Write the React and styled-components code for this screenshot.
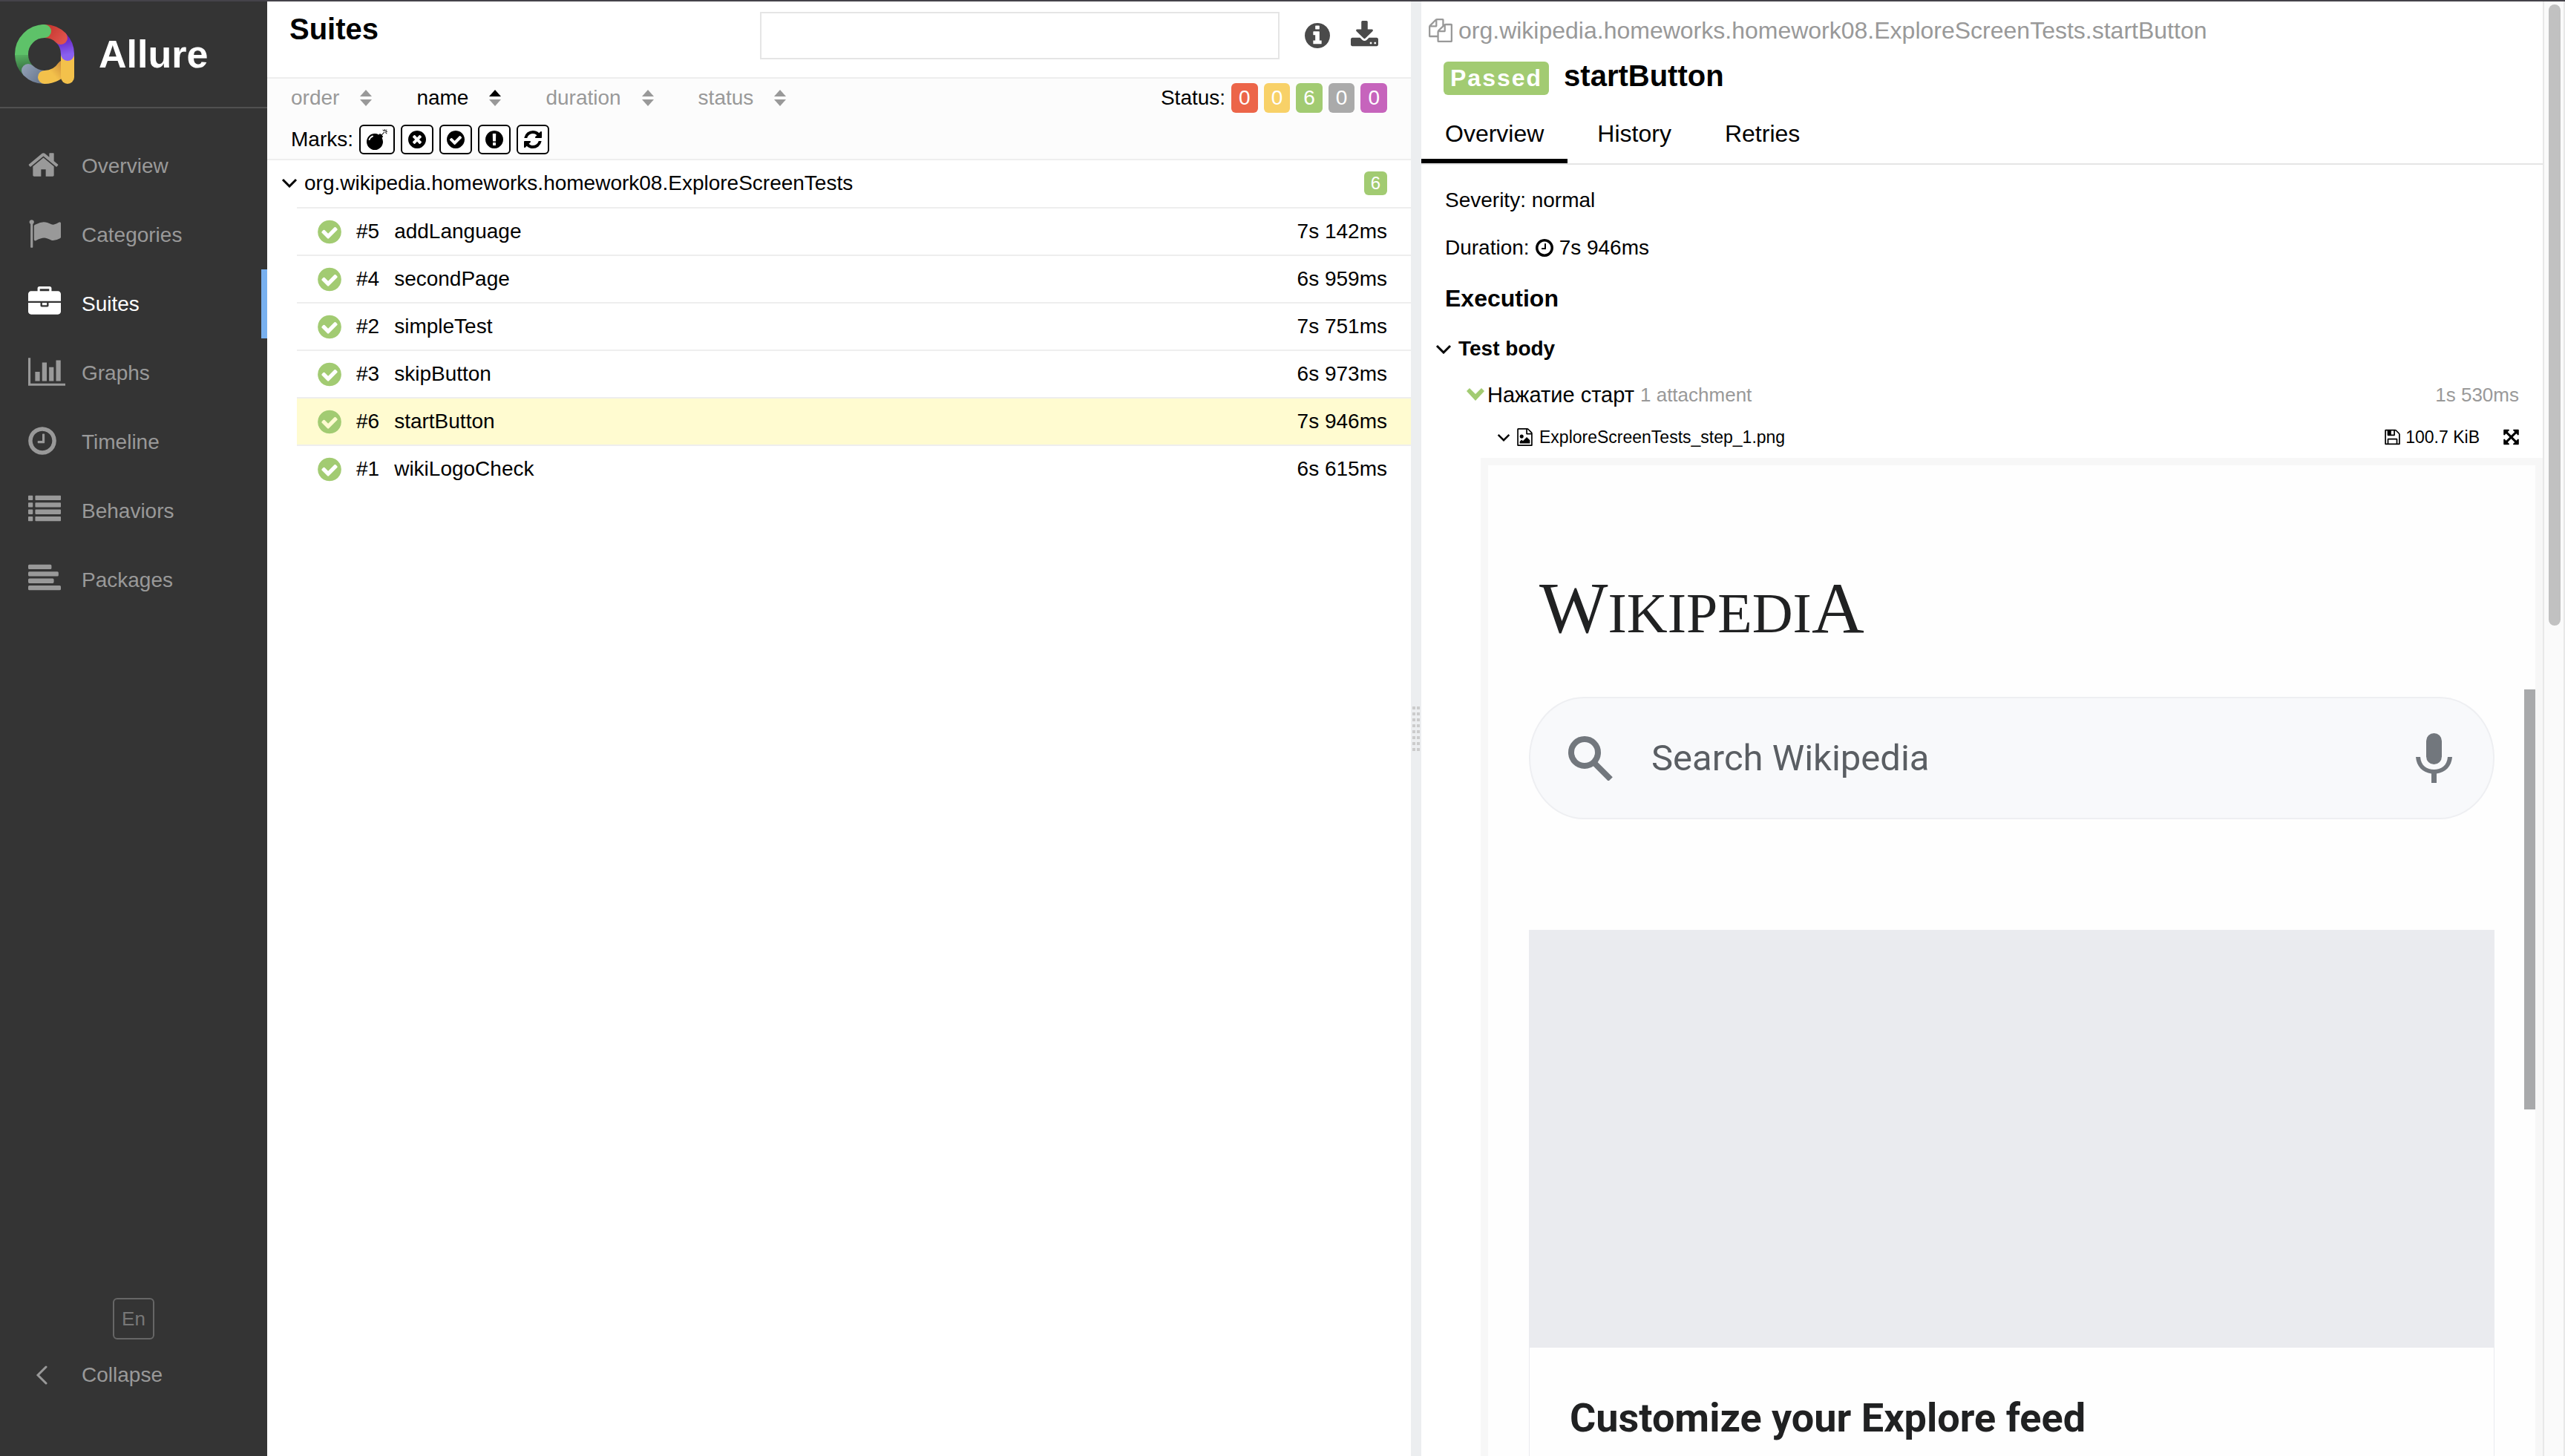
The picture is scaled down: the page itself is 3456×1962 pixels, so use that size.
import React from "react";
import styled, { createGlobalStyle } from "styled-components";

const GlobalStyle = createGlobalStyle`
  *, *::before, *::after { box-sizing: border-box; }
  html, body { margin: 0; height: 100%; overflow: hidden; }
  body {
    background: #fff;
    color: #000;
    font: 28px/32px "Helvetica Neue", "Liberation Sans", Arial, sans-serif;
  }
  h1, h2, h3, p, ul, figure { margin: 0; padding: 0; }
  ul { list-style: none; }
  a { color: inherit; text-decoration: none; }
  button {
    margin: 0;
    padding: 0;
    border: 0;
    background: none;
    color: inherit;
    font: inherit;
    cursor: pointer;
  }
`;

/* ---------- icons ---------- */

const DISC =
  "m0 0q0 209-103 385.5t-279.5 279.5-385.5 103-385.5-103-279.5-279.5-103-385.5 103-385.5 279.5-279.5 385.5-103 385.5 103 279.5 279.5 103 385.5z";

const ICONS = {
  home: {
    box: [64, 1664],
    d: "M1472 992v480q0 26-19 45t-45 19h-384v-384h-256v384h-384q-26 0-45-19t-19-45v-480q0-1 .5-3t.5-3l575-474 575 474q1 2 1 6zm223-69l-62 74q-8 9-21 11h-3q-13 0-21-7l-692-577-692 577q-12 8-24 7-13-2-21-11l-62-74q-8-10-7-23.5t11-21.5l719-599q32-26 76-26t76 26l244 204v-195q0-14 9-23t23-9h192q14 0 23 9t9 23v408l219 182q10 8 11 21.5t-7 23.5z",
  },
  flag: {
    box: [0, 1792],
    d: "M320 256q0 72-64 110v1266q0 13-9.5 22.5t-22.5 9.5h-64q-13 0-22.5-9.5t-9.5-22.5v-1266q-64-38-64-110 0-53 37.5-90.5t90.5-37.5 90.5 37.5 37.5 90.5zm1472 64v763q0 25-12.5 38.5t-39.5 27.5q-215 116-369 116-61 0-123.5-22t-108.5-48-115.5-48-142.5-22q-192 0-464 146-17 9-33 9-26 0-45-19t-19-45v-742q0-32 31-55 21-14 79-43 236-120 421-120 107 0 200 29t219 88q38 19 88 19 54 0 117.5-21t110-47 88-47 54.5-21q26 0 45 19t19 45z",
  },
  briefcase: {
    box: [0, 1792],
    d: "M640 256h512v-128h-512v128zm1152 640v480q0 66-47 113t-113 47h-1472q-66 0-113-47t-47-113v-480h672v160q0 26 19 45t45 19h320q26 0 45-19t19-45v-160h672zm-768 0v128h-256v-128h256zm768-480v384h-1792v-384q0-66 47-113t113-47h352v-160q0-40 28-68t68-28h576q40 0 68 28t28 68v160h352q66 0 113 47t47 113z",
  },
  chart: {
    box: [0, 2048],
    d: "M640 896v512h-256v-512h256zm384-512v1024h-256v-1024h256zm1024 1152v128h-2048v-1536h128v1408h1920zm-640-896v768h-256v-768h256zm384-384v1152h-256v-1152h256z",
  },
  clock: {
    box: [128, 1536],
    d: "M1024 544v448q0 14-9 23t-23 9h-320q-14 0-23-9t-9-23v-64q0-14 9-23t23-9h224v-352q0-14 9-23t23-9h64q14 0 23 9t9 23zm416 352q0-148-73-273t-198-198-273-73-273 73-198 198-73 273 73 273 198 198 273 73 273-73 198-198 73-273zM1664 896" + DISC,
  },
  list: {
    box: [0, 1792],
    d: [112, 496, 880, 1264]
      .map((y) => `M32 ${y}h192q32 0 32 32v192q0 32-32 32h-192q-32 0-32-32v-192q0-32 32-32zM416 ${y}h1344q32 0 32 32v192q0 32-32 32h-1344q-32 0-32-32v-192q0-32 32-32z`)
      .join(""),
  },
  lines: {
    box: [0, 1792],
    d: [[112, 1280], [496, 1664], [880, 1408], [1264, 1792]]
      .map(([y, w]) => `M64 ${y}h${w - 128}q64 0 64 64v128q0 64-64 64h-${w - 128}q-64 0-64-64v-128q0-64 64-64z`)
      .join(""),
  },
  info: {
    box: [128, 1536],
    d: "M1152 1376v-160q0-14-9-23t-23-9h-96v-512q0-14-9-23t-23-9h-320q-14 0-23 9t-9 23v160q0 14 9 23t23 9h96v320h-96q-14 0-23 9t-9 23v160q0 14 9 23t23 9h448q14 0 23-9t9-23zm-128-896v-160q0-14-9-23t-23-9h-192q-14 0-23 9t-9 23v160q0 14 9 23t23 9h192q14 0 23-9t9-23zM1664 896" + DISC,
  },
  download: {
    box: [64, 1664],
    d: "M1344 1344q0-26-19-45t-45-19-45 19-19 45 19 45 45 19 45-19 19-45zm256 0q0-26-19-45t-45-19-45 19-19 45 19 45 45 19 45-19 19-45zm128-224v320q0 40-28 68t-68 28h-1472q-40 0-68-28t-28-68v-320q0-40 28-68t68-28h465l135 136q58 56 136 56t136-56l136-136h464q40 0 68 28t28 68zm-325-569q17 41-14 70l-448 448q-18 19-45 19t-45-19l-448-448q-31-29-14-70 17-39 59-39h256v-448q0-26 19-45t45-19h256q26 0 45 19t19 45v448h256q42 0 59 39z",
  },
  bomb: {
    box: [0, 1792],
    d: "M571 589q-10-25-34-35t-49 0q-108 44-191 127t-127 191q-10 25 0 49t35 34q13 5 24 5 42 0 60-40 34-84 98.5-148.5t148.5-98.5q25-11 35-35t0-49zm942-356l46 46-244 243 68 68q19 19 19 45.5t-19 45.5l-64 64q89 161 89 343 0 143-55.5 273.5t-150 225-225 150-273.5 55.5-273.5-55.5-225-150-150-225-55.5-273.5 55.5-273.5 150-225 225-150 273.5-55.5q182 0 343 89l64-64q19-19 45.5-19t45.5 19l68 68zm8-56q-10 10-22 10-13 0-23-10l-91-90q-9-10-9-23t9-23q10-9 23-9t23 9l90 91q10 9 10 22.5t-10 22.5zm230 230q-11 9-23 9t-23-9l-90-91q-10-9-10-22.5t10-22.5q9-10 22.5-10t22.5 10l91 90q9 10 9 23t-9 23zm41-183q0 14-9 23t-23 9h-96q-14 0-23-9t-9-23 9-23 23-9h96q14 0 23 9t9 23zm-192-192v96q0 14-9 23t-23 9-23-9-9-23v-96q0-14 9-23t23-9 23 9 9 23zm151 55l-91 90q-10 10-22 10-13 0-23-10-10-9-10-22.5t10-22.5l90-91q10-9 23-9t23 9q9 10 9 23t-9 23z",
  },
  times: {
    box: [128, 1536],
    d: "M1277 1122q0-26-19-45l-181-181 181-181q19-19 19-45 0-27-19-46l-90-90q-19-19-46-19-26 0-45 19l-181 181-181-181q-19-19-45-19-27 0-46 19l-90 90q-19 19-19 46 0 26 19 45l181 181-181 181q-19 19-19 45 0 27 19 46l90 90q19 19 46 19 26 0 45-19l181-181 181 181q19 19 45 19 27 0 46-19l90-90q19-19 19-46zM1664 896" + DISC,
  },
  check: {
    box: [128, 1536],
    d: "M1412 734q0-28-18-46l-91-90q-19-19-45-19t-45 19l-408 407-226-226q-19-19-45-19t-45 19l-91 90q-18 18-18 46 0 27 18 45l362 362q19 19 45 19 27 0 46-19l543-543q18-18 18-45zM1664 896" + DISC,
  },
  alert: {
    box: [128, 1536],
    d: "M896 128q209 0 385.5 103t279.5 279.5 103 385.5-103 385.5-279.5 279.5-385.5 103-385.5-103-279.5-279.5-103-385.5 103-385.5 279.5-279.5 385.5-103zm128 1247v-190q0-14-9-23.5t-22-9.5h-192q-13 0-23 10t-10 23v190q0 13 10 23t23 10h192q13 0 22-9.5t9-23.5zm-2-344l18-621q0-12-10-18-10-8-24-8h-220q-14 0-24 8-10 6-10 18l17 621q0 10 10 17.5t24 7.5h185q14 0 23.5-7.5t10.5-17.5z",
  },
  refresh: {
    box: [128, 1536],
    d: "M1639 1056q0 5-1 7-64 268-268 434.5t-478 166.5q-146 0-282.5-55t-243.5-157l-129 129q-19 19-45 19t-45-19-19-45v-448q0-26 19-45t45-19h448q26 0 45 19t19 45-19 45l-137 137q71 66 161 102t187 36q134 0 250-65t186-179q11-17 53-117 8-23 30-23h192q13 0 22.5 9.5t9.5 22.5zm25-800v448q0 26-19 45t-45 19h-448q-26 0-45-19t-19-45 19-45l138-138q-148-137-349-137-134 0-250 65t-186 179q-11 17-53 117-8 23-30 23h-199q-13 0-22.5-9.5t-9.5-22.5v-7q65-268 270-434.5t480-166.5q146 0 284 55.5t245 156.5l130-129q19-19 45-19t45 19 19 45z",
  },
  expand: {
    box: [128, 1536],
    d: "M1411 541l-355 355 355 355 144-144q29-31 70-14 39 17 39 59v448q0 26-19 45t-45 19h-448q-42 0-59-40-17-39 14-69l144-144-355-355-355 355 144 144q31 30 14 69-17 40-59 40h-448q-26 0-45-19t-19-45v-448q0-42 40-59 39-17 69 14l144 144 355-355-355-355-144 144q-19 19-45 19-12 0-24-5-40-17-40-59v-448q0-26 19-45t45-19h448q42 0 59 40 17 39-14 69l-144 144 355 355 355-355-144-144q-31-30-14-69 17-40 59-40h448q26 0 45 19t19 45v448q0 42-39 59-13 5-25 5-26 0-45-19z",
  },
  save: {
    box: [128, 1536],
    d: "M512 1536h768v-384h-768v384zm896 0h128v-896q0-14-10-38.5t-20-34.5l-281-281q-10-10-34-20t-39-10v416q0 40-28 68t-68 28h-576q-40 0-68-28t-28-68v-416h-128v1280h128v-416q0-40 28-68t68-28h832q40 0 68 28t28 68v416zm-384-928v-320q0-13-9.5-22.5t-22.5-9.5h-192q-13 0-22.5 9.5t-9.5 22.5v320q0 13 9.5 22.5t22.5 9.5h192q13 0 22.5-9.5t9.5-22.5zm640 32v928q0 40-28 68t-68 28h-1344q-40 0-68-28t-28-68v-1344q0-40 28-68t68-28h928q40 0 88 20t76 48l280 280q28 28 48 76t20 88z",
  },
  image: {
    box: [128, 1536],
    d: "M1596 380q28 28 48 76t20 88v1152q0 40-28 68t-68 28h-1344q-40 0-68-28t-28-68v-1600q0-40 28-68t68-28h896q40 0 88 20t76 48zm-444-244v376h376q-10-29-22-41l-313-313q-12-12-41-22zm384 1528v-1024h-416q-40 0-68-28t-28-68v-416h-768v1536h1280zm-128-448v320h-1024v-192l192-192 128 128 384-384zm-832-192q-80 0-136-56t-56-136 56-136 136-56 136 56 56 136-56 136-136 56z",
  },
  copy: {
    box: [0, 1792],
    d: "M1696 384q40 0 68 28t28 68v1216q0 40-28 68t-68 28h-960q-40 0-68-28t-28-68v-288h-544q-40 0-68-28t-28-68v-672q0-40 20-88t48-76l408-408q28-28 76-48t88-20h416q40 0 68 28t28 68v328q68-40 128-40h416zm-544 213l-299 299h299v-299zm-640-384l-299 299h299v-299zm196 647l316-316v-416h-384v416q0 40-28 68t-68 28h-416v640h512v-256q0-40 20-88t48-76zm956 804v-1152h-384v416q0 40-28 68t-68 28h-416v640h896z",
  },
};

const Svg = styled.svg`
  display: block;
  flex: none;
  fill: currentColor;
`;

function Icon({ name, size }) {
  const { box, d } = ICONS[name];
  return (
    <Svg height={size} width={Math.round((size * box[1]) / 1792)} viewBox={`${box[0]} 0 ${box[1]} 1792`} aria-hidden="true">
      <path d={d} />
    </Svg>
  );
}

function Chevron({ width = 22, stroke = 3 }) {
  return (
    <Svg width={width} height={Math.round(width * 0.6)} viewBox="0 0 22 13" aria-hidden="true">
      <path d="M2 2l9 9 9-9" fill="none" stroke="currentColor" strokeWidth={stroke} />
    </Svg>
  );
}

function StepArrow() {
  return (
    <Svg width="26" height="18" viewBox="0 0 26 18" aria-hidden="true">
      <path d="M1 4l4-4 8 8 8-8 4 4-12 13z" />
    </Svg>
  );
}

function SortArrows({ up }) {
  return (
    <Svg width="16" height="22" viewBox="0 0 16 22" aria-hidden="true">
      <path d="M0 9l8-9 8 9z" fill={up ? "#000" : "#999"} />
      <path d="M0 13h16l-8 9z" fill="#999" />
    </Svg>
  );
}

function Logo() {
  return (
    <Svg width="80" height="80" viewBox="0 0 80 80" aria-hidden="true">
      <defs>
        <linearGradient id="green" x1="0" y1="36" x2="4" y2="62" gradientUnits="userSpaceOnUse">
          <stop offset="0" stopColor="#5ec269" />
          <stop offset="1" stopColor="#3a7544" />
        </linearGradient>
        <linearGradient id="slate" x1="10" y1="54" x2="38" y2="76" gradientUnits="userSpaceOnUse">
          <stop offset="0" stopColor="#95a3b8" />
          <stop offset="1" stopColor="#66758d" />
        </linearGradient>
        <linearGradient id="gold" x1="50" y1="66" x2="66" y2="52" gradientUnits="userSpaceOnUse">
          <stop offset="0" stopColor="#f3c14b" />
          <stop offset="1" stopColor="#cc8a3a" />
        </linearGradient>
        <linearGradient id="violet" x1="68" y1="18" x2="73" y2="40" gradientUnits="userSpaceOnUse">
          <stop offset="0" stopColor="#6622c4" />
          <stop offset="1" stopColor="#8960f0" />
        </linearGradient>
        <linearGradient id="red" x1="46" y1="6" x2="66" y2="22" gradientUnits="userSpaceOnUse">
          <stop offset="0" stopColor="#c93a32" />
          <stop offset="1" stopColor="#df534c" />
        </linearGradient>
      </defs>
      <g fill="none" strokeWidth="18" strokeLinecap="round">
        <path d="M18 62A31 31 0 0 1 9 40" stroke="url(#green)" strokeLinecap="butt" />
        <path d="M18 62A31 31 0 0 0 40 71" stroke="url(#slate)" />
        <path d="M40 71A31 31 0 0 0 66 57" stroke="url(#gold)" />
        <path d="M71 43V71" stroke="#f3c14b" />
        <path d="M62 18A31 31 0 0 1 71 40" stroke="url(#violet)" />
        <path d="M40 9A31 31 0 0 1 62 18" stroke="url(#red)" />
        <path d="M9 41V40A31 31 0 0 1 40 9" stroke="#5ec269" strokeLinecap="butt" />
        <path d="M38 9H40" stroke="#5ec269" />
      </g>
    </Svg>
  );
}

/* ---------- layout ---------- */

const Page = styled.div`
  display: flex;
  height: 100vh;
  border-top: 2px solid #45434a;
`;

const Sidebar = styled.aside`
  display: flex;
  flex: none;
  flex-direction: column;
  width: 360px;
  padding-bottom: 63px;
  background: #343434;
  color: #999;
`;

const Brand = styled.a`
  display: flex;
  align-items: center;
  gap: 33px;
  height: 144px;
  padding-left: 20px;
  border-bottom: 2px solid #505050;
  color: #fff;
  font-size: 52px;
  font-weight: bold;
  line-height: 60px;
`;

const Menu = styled.ul`
  flex: 1;
  padding-top: 31px;
`;

const MenuLink = styled.a`
  display: flex;
  align-items: center;
  height: 93px;
  padding-left: 38px;
  border-right: 8px solid ${(p) => (p.$active ? "#78b0ef" : "transparent")};
  color: ${(p) => (p.$active ? "#fff" : "#999")};
`;

const MenuIcon = styled.span`
  flex: none;
  width: 72px;
  padding-bottom: 4px;
`;

const Language = styled.button`
  align-self: center;
  width: 56px;
  height: 56px;
  margin-bottom: 1px;
  && {
    border: 2px solid #666;
    color: #777;
    font-size: 26px;
  }
  border-radius: 6px;
`;

const Collapse = styled.button`
  display: flex;
  align-items: center;
  height: 93px;
  && { padding-left: 48px; }
  text-align: left;
  gap: 46px;
`;

const Panel = styled.main`
  flex: 1;
  min-width: 0;
  background: #fff;
`;

const PanelHeader = styled.header`
  display: flex;
  padding: 14px 44px 24px 30px;
  border-bottom: 2px solid #eee;
`;

const PanelTitle = styled.h1`
  flex: 1;
  font-size: 40px;
  line-height: 46px;
`;

const SearchBox = styled.input`
  width: 700px;
  height: 64px;
  padding: 0 16px;
  border: 2px solid #e5e5e5;
  background: #fff;
  font: inherit;
`;

const Tools = styled.div`
  display: flex;
  align-items: center;
  gap: 28px;
  padding-left: 34px;
  color: #4a4a4a;
`;

const Filters = styled.div`
  display: flex;
  flex-direction: column;
  gap: 16px;
  padding: 6px 32px 6px 32px;
  border-bottom: 2px solid #eee;
  background: #fcfcfc;
`;

const FilterLine = styled.div`
  display: flex;
  align-items: center;
  justify-content: ${(p) => (p.$spread ? "space-between" : "flex-start")};
  gap: 8px;
  height: 40px;
`;

const Sorters = styled.div`
  display: flex;
  gap: 60px;
`;

const Sorter = styled.button`
  display: flex;
  align-items: center;
  gap: 28px;
  && { color: ${(p) => (p.$active ? "#000" : "#999")}; }
`;

const Statuses = styled.div`
  display: flex;
  align-items: center;
  gap: 8px;
`;

const STATUS_COLORS = {
  failed: "#ec6549",
  broken: "#f8d168",
  passed: "#a2cb72",
  skipped: "#aaa",
  unknown: "#c664bc",
};

const StatusToggle = styled.button`
  && {
    padding: 0 10px;
    background: ${(p) => STATUS_COLORS[p.$status]};
    color: #fff;
  }
  border-radius: 6px;
  line-height: 40px;
`;

const MarkToggle = styled.button`
  display: flex;
  align-items: center;
  height: 40px;
  && {
    padding: 0 8px;
    border: 2px solid #000;
  }
  border-radius: 6px;
  background: #fff;
`;

const Group = styled.button`
  display: flex;
  align-items: center;
  gap: 9px;
  width: 100%;
  height: 63px;
  && { padding: 0 32px 2px 19px; }
  text-align: left;
`;

const GroupName = styled.span`
  flex: 1;
`;

const Count = styled.span`
  padding: 0 9px;
  border-radius: 6px;
  background: ${STATUS_COLORS.passed};
  color: #fff;
  font-size: 24px;
`;

const Tests = styled.ul`
  margin-left: 40px;
`;

const Test = styled.a`
  display: flex;
  align-items: center;
  gap: 20px;
  height: 64px;
  padding: 0 32px 0 28px;
  border-top: 2px solid #eee;
  background: ${(p) => (p.$selected ? "#fffbd0" : "#fff")};
`;

const TestName = styled.span`
  flex: 1;
`;

const Passed = styled.span`
  color: ${STATUS_COLORS.passed};
`;

const Splitter = styled.div`
  display: flex;
  flex: none;
  align-items: center;
  justify-content: center;
  width: 14px;
  background: #eceef0;
`;

const Grip = styled.div`
  display: grid;
  grid-template-columns: 4px 4px;
  grid-auto-rows: 4px;
  gap: 4px 2px;
`;

const Dot = styled.i`
  background: #ccc;
`;

const Details = styled.section`
  display: flex;
  flex: 1;
  min-width: 0;
  overflow: hidden;
`;

const DetailsContent = styled.div`
  flex: 1;
  min-width: 0;
`;

const Crumb = styled.div`
  display: flex;
  align-items: center;
  gap: 8px;
  padding: 19px 0 18px 10px;
  color: #999;
  font-size: 32px;
  line-height: 40px;
`;

const Heading = styled.div`
  display: flex;
  align-items: baseline;
  gap: 20px;
  padding-left: 30px;
`;

const Badge = styled.span`
  padding: 0 9px;
  border-radius: 6px;
  background: ${STATUS_COLORS.passed};
  color: #fff;
  font-size: 32px;
  font-weight: bold;
  letter-spacing: 2px;
  line-height: 45px;
`;

const TestTitle = styled.h2`
  font-size: 40px;
  line-height: 46px;
`;

const Tabs = styled.nav`
  display: flex;
  gap: 8px;
  padding-top: 32px;
  border-bottom: 2px solid #e5e5e5;
`;

const Tab = styled.a`
  padding: 0 32px 14px;
  border-bottom: 6px solid ${(p) => (p.$active ? "#000" : "transparent")};
  font-size: 32px;
  line-height: 40px;
`;

const Body = styled.div`
  padding-top: 32px;
`;

const Line = styled.p`
  display: flex;
  align-items: center;
  gap: 8px;
  padding: 0 32px 32px;
`;

const SectionTitle = styled.h3`
  padding: 0 32px 32px;
  font-size: 32px;
  line-height: 40px;
`;

const Row = styled.div`
  display: flex;
  align-items: center;
  gap: ${(p) => p.$gap}px;
  padding: 0 32px ${(p) => p.$after}px ${(p) => p.$indent}px;
  font-size: ${(p) => p.$size}px;
`;

const Toggle = styled.button`
  display: flex;
  align-items: center;
  gap: ${(p) => p.$gap}px;
  && { font-weight: ${(p) => (p.$strong ? "bold" : "normal")}; }
`;

const Muted = styled.span`
  color: #999;
  font-size: 26px;
`;

const Spacer = styled.span`
  flex: 1;
`;

const FileLink = styled.a`
  display: flex;
  align-items: center;
  gap: 7px;
  padding-right: 16px;
`;

const Preview = styled.figure`
  position: relative;
  margin-left: 80px;
  padding: 142px 55px 0;
  border: 10px solid #f7f7f7;
  background: #fefefe;
`;

const Wordmark = styled.div`
  padding-left: 14px;
  color: #202122;
  font: 98px/100px "Liberation Serif", "Times New Roman", serif;
`;

const Small = styled.span`
  font-size: 76px;
  line-height: 76px;
`;

const WikiSearch = styled.label`
  display: flex;
  align-items: center;
  height: 165px;
  margin: 70px 0 149px;
  padding: 0 55px 0 51px;
  border: 2px solid #eeeff2;
  border-radius: 74px / 82px;
  background: #f8f9fb;
  color: #72777d;
`;

const WikiInput = styled.input`
  flex: 1;
  min-width: 0;
  padding: 0 0 0 52px;
  border: 0;
  background: none;
  font: 49px/60px Roboto, sans-serif;
  &::placeholder { color: #5a5e63; opacity: 1; }
`;

const Card = styled.div`
  border: 1px solid #eaebef;
  border-top: 0;
`;

const CardImage = styled.div`
  height: 563px;
  background: #eaebef;
`;

const CardTitle = styled.h3`
  padding: 65px 54px 80px;
  color: #202122;
  font: 700 54px/60px Roboto, sans-serif;
`;

const PreviewThumb = styled.div`
  position: absolute;
  top: 302px;
  right: 0;
  width: 15px;
  height: 566px;
  background: #a8a9ab;
`;

const Scrollbar = styled.div`
  flex: none;
  width: 30px;
  padding: 4px 4px 0 6px;
  border: solid #e8e8e8;
  border-width: 0 2px;
  background: #fafafa;
`;

const Thumb = styled.div`
  height: 42.8%;
  border-radius: 8px;
  background: #c1c1c1;
`;

/* ---------- data ---------- */

const MENU = [
  ["Overview", "home"],
  ["Categories", "flag"],
  ["Suites", "briefcase"],
  ["Graphs", "chart"],
  ["Timeline", "clock"],
  ["Behaviors", "list"],
  ["Packages", "lines"],
];

const STATUSES = [
  ["failed", 0],
  ["broken", 0],
  ["passed", 6],
  ["skipped", 0],
  ["unknown", 0],
];

const MARKS = [
  ["Flaky", "bomb"],
  ["New failed", "times"],
  ["New passed", "check"],
  ["New broken", "alert"],
  ["Retries", "refresh"],
];

const TESTS = [
  [5, "addLanguage", "7s 142ms"],
  [4, "secondPage", "6s 959ms"],
  [2, "simpleTest", "7s 751ms"],
  [3, "skipButton", "6s 973ms"],
  [6, "startButton", "7s 946ms"],
  [1, "wikiLogoCheck", "6s 615ms"],
];

export default function App() {
  return (
    <>
      <GlobalStyle />
      <Page>
        <Sidebar>
          <Brand href="#">
            <Logo />
            Allure
          </Brand>
          <Menu>
            {MENU.map(([label, icon]) => (
              <li key={label}>
                <MenuLink href={`#${label}`} $active={label === "Suites"}>
                  <MenuIcon><Icon name={icon} size={44} /></MenuIcon>
                  {label}
                </MenuLink>
              </li>
            ))}
          </Menu>
          <Language type="button">En</Language>
          <Collapse type="button">
            <Svg width="16" height="26" viewBox="0 0 16 26" aria-hidden="true">
              <path d="M14 2L3 13l11 11" fill="none" stroke="currentColor" strokeWidth="3" strokeLinecap="round" />
            </Svg>
            Collapse
          </Collapse>
        </Sidebar>

        <Panel>
          <PanelHeader>
            <PanelTitle>Suites</PanelTitle>
            <SearchBox type="text" aria-label="Search tests" />
            <Tools>
              <button type="button" aria-label="Info"><Icon name="info" size={40} /></button>
              <button type="button" aria-label="Download CSV"><Icon name="download" size={40} /></button>
            </Tools>
          </PanelHeader>
          <Filters>
            <FilterLine $spread>
              <Sorters>
                {["order", "name", "duration", "status"].map((key) => (
                  <Sorter key={key} type="button" $active={key === "name"}>
                    {key}
                    <SortArrows up={key === "name"} />
                  </Sorter>
                ))}
              </Sorters>
              <Statuses>
                Status:
                {STATUSES.map(([status, count]) => (
                  <StatusToggle key={status} type="button" $status={status}>{count}</StatusToggle>
                ))}
              </Statuses>
            </FilterLine>
            <FilterLine>
              Marks:
              {MARKS.map(([label, icon]) => (
                <MarkToggle key={label} type="button" aria-label={label}>
                  <Icon name={icon} size={28} />
                </MarkToggle>
              ))}
            </FilterLine>
          </Filters>
          <Group type="button">
            <Chevron />
            <GroupName>org.wikipedia.homeworks.homework08.ExploreScreenTests</GroupName>
            <Count>6</Count>
          </Group>
          <Tests>
            {TESTS.map(([order, name, time]) => (
              <li key={order}>
                <Test href={`#${name}`} $selected={name === "startButton"}>
                  <Passed><Icon name="check" size={37} /></Passed>
                  <span>#{order}</span>
                  <TestName>{name}</TestName>
                  <span>{time}</span>
                </Test>
              </li>
            ))}
          </Tests>
        </Panel>

        <Splitter>
          <Grip>
            {Array.from({ length: 16 }, (_, i) => <Dot key={i} />)}
          </Grip>
        </Splitter>

        <Details>
          <DetailsContent>
            <Crumb>
              <Icon name="copy" size={32} />
              org.wikipedia.homeworks.homework08.ExploreScreenTests.startButton
            </Crumb>
            <Heading>
              <Badge>Passed</Badge>
              <TestTitle>startButton</TestTitle>
            </Heading>
            <Tabs>
              <Tab href="#overview" $active>Overview</Tab>
              <Tab href="#history">History</Tab>
              <Tab href="#retries">Retries</Tab>
            </Tabs>
            <Body>
              <Line>Severity: normal</Line>
              <Line>
                Duration: <Icon name="clock" size={28} /> 7s 946ms
              </Line>
              <SectionTitle>Execution</SectionTitle>
              <Row $indent={19} $after={30} $size={28}>
                <Toggle type="button" $gap={9} $strong>
                  <Chevron />
                  Test body
                </Toggle>
              </Row>
              <Row $indent={60} $after={25} $size={29} $gap={8}>
                <Toggle type="button" $gap={3}>
                  <Passed><StepArrow /></Passed>
                  Нажатие старт
                </Toggle>
                <Muted>1 attachment</Muted>
                <Spacer />
                <Muted>1s 530ms</Muted>
              </Row>
              <Row $indent={102} $after={12} $size={23} $gap={16}>
                <Toggle type="button" $gap={9}>
                  <Chevron width={18} />
                  <Icon name="image" size={24} />
                  ExploreScreenTests_step_1.png
                </Toggle>
                <Spacer />
                <FileLink href="#file">
                  <Icon name="save" size={24} />
                  100.7 KiB
                </FileLink>
                <button type="button" aria-label="Full screen"><Icon name="expand" size={24} /></button>
              </Row>
              <Preview>
                <Wordmark>W<Small>IKIPEDI</Small>A</Wordmark>
                <WikiSearch>
                  <Svg width="60" height="60" viewBox="0 0 60 60" aria-hidden="true">
                    <g fill="none" stroke="currentColor">
                      <circle cx="22" cy="22" r="18" strokeWidth="8" />
                      <path d="M36 37L57 58" strokeWidth="8" />
                    </g>
                  </Svg>
                  <WikiInput type="text" placeholder="Search Wikipedia" />
                  <Svg width="49" height="67" viewBox="0 0 49 67" aria-hidden="true">
                    <rect x="14" y="0" width="21" height="42" rx="10.5" />
                    <path d="M0 32h6c1 12 9 17 18.500 17s17.500-5 18.500-17h6c-1 13-9 20.500-21 22.500v12.500h-7v-12.500c-12-2-20-9.500-21-22.500z" />
                  </Svg>
                </WikiSearch>
                <Card>
                  <CardImage />
                  <CardTitle>Customize your Explore feed</CardTitle>
                </Card>
                <PreviewThumb />
              </Preview>
            </Body>
          </DetailsContent>
          <Scrollbar>
            <Thumb />
          </Scrollbar>
        </Details>
      </Page>
    </>
  );
}
